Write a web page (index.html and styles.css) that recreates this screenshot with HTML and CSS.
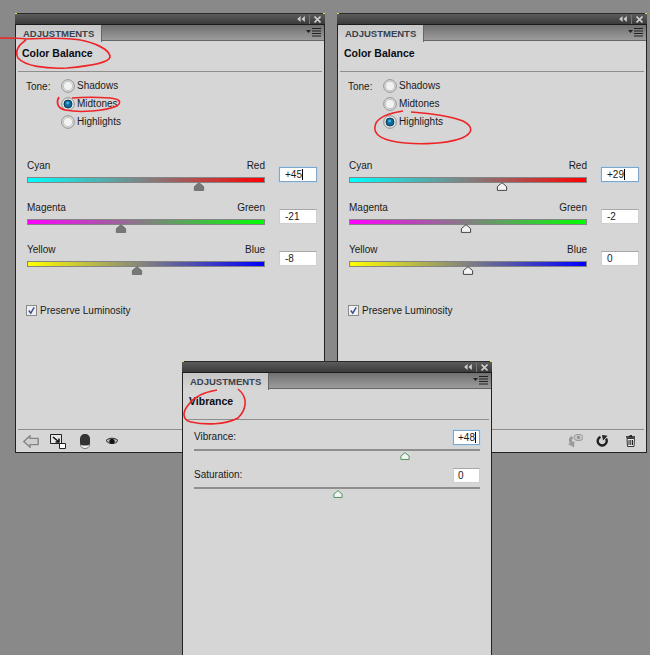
FILE: index.html
```html
<!doctype html>
<html lang="en">
    <head>
        <meta charset="UTF-8" />
        <title>Adjustments panels</title>
        <link rel="stylesheet" href="styles.css">
    </head>
    <body>
        <svg class="defs" width="0" height="0">
            <symbol id="thumb" viewBox="0 0 12 9">
                <path d="M6 .7 10.6 4.6V8.4H1.4V4.6Z" />
            </symbol>
            <symbol id="radio" viewBox="0 0 14 14">
                <circle cx="7" cy="7" r="6.3" fill="#e4e4e4" stroke="#8e8e8e" />
                <circle cx="7" cy="7" r="4.6" fill="#f2f2f2" stroke="#c4c4c4" />
            </symbol>
            <symbol id="radio-on" viewBox="0 0 14 14">
                <circle cx="7" cy="7" r="6.3" fill="#e4e4e4" stroke="#8e8e8e" />
                <circle cx="7" cy="7" r="4" fill="#0a6a9e" stroke="#123c58" />
                <circle cx="6.6" cy="6" r="1.5" fill="#45b4e2" />
            </symbol>
            <symbol id="menu" viewBox="0 0 15 9">
                <path d="M0 2H5L2.5 5Z" fill="#222" />
                <path d="M6 .5H15M6 3H15M6 5.5H15M6 8H15" stroke="#222" />
            </symbol>
            <symbol id="collapse" viewBox="0 0 9 7">
                <path d="M4 0V7L0 3.5ZM9 0V7L5 3.5Z" fill="#ccc" />
            </symbol>
            <symbol id="close" viewBox="0 0 7 7">
                <path d="M.5.5 6.5 6.5M6.5.5 .5 6.5" stroke="#ccc" stroke-width="1.6" />
            </symbol>
            <symbol id="back" viewBox="0 0 16 13">
                <path d="M.8 6.5 7 .8V3.4H15.2V9.6H7V12.2Z" fill="#cfcfcf" stroke="#858585" stroke-width="1.4" />
            </symbol>
            <symbol id="clip" viewBox="0 0 16 15">
                <path d="M.5.5H11.5V9.5H.5Z" fill="#e8e8e8" stroke="#222" />
                <path d="M3 3 9 8M9 4.5V8H5.5" fill="none" stroke="#111" stroke-width="1.5" />
                <path d="M9.5 9.5H15.5V14.5H9.5Z" fill="#fff" stroke="#222" />
            </symbol>
            <symbol id="layer" viewBox="0 0 10 15">
                <path d="M.5 9.5V11C.5 13 2.5 14.5 5 14.5S9.5 13 9.5 11V9.5Z" fill="#f2f2f2" stroke="#777" />
                <path d="M0 5C0 2 2 0 5 0S10 2 10 5V9C10 11 8 11.5 5 11.5S0 11 0 9Z" fill="#333" />
            </symbol>
            <symbol id="eye" viewBox="0 0 12 9">
                <path d="M0 3.5C3 .5 9 .5 12 3.5C10 7 3 8 0 3.5Z" fill="#bbb" stroke="#222" />
                <circle cx="6" cy="4.3" r="2.6" fill="#111" />
            </symbol>
            <symbol id="prev" viewBox="0 0 16 14">
                <path d="M5 2C2 3 1 6 3 9L1 10 7 13.5 7.5 7 5.5 8C4.5 6.5 5 5 6 4.5Z" fill="#9a9a9a" />
                <ellipse cx="11.5" cy="3.5" rx="4.5" ry="3" fill="#c8c8c8" stroke="#929292" />
                <circle cx="11.5" cy="3.5" r="1.4" fill="#8a8a8a" />
            </symbol>
            <symbol id="reset" viewBox="0 0 12 12">
                <path d="M4.5 1.8A4.5 4.5 0 1 0 10 3.5" fill="none" stroke="#222" stroke-width="2.4" />
                <path d="M6 0 11.5 .8 7 5.5Z" fill="#222" />
            </symbol>
            <symbol id="trash" viewBox="0 0 11 12">
                <path d="M1 2H10M4 1.5 7 .5" stroke="#222" stroke-width="1.5" />
                <path d="M2 3.5H9.5L9 11.5H2.5Z" fill="#eee" stroke="#333" />
                <path d="M4 5V10M5.8 5V10M7.5 5V10" stroke="#222" />
            </symbol>
        </svg>

        <section class="panel panel-left">
            <div class="titlebar">
                <svg class="icon-collapse"><use href="#collapse" /></svg>
                <span class="titlebar-sep"></span>
                <svg class="icon-close"><use href="#close" /></svg>
            </div>
            <div class="tabstrip">
                <div class="tab">ADJUSTMENTS</div>
                <svg class="icon-menu"><use href="#menu" /></svg>
            </div>
            <h2 class="panel-title">Color Balance</h2>
            <div class="tone">
                <span class="tone-label">Tone:</span>
                <div class="tone-options">
                    <div class="radio-row"><svg class="radio"><use href="#radio" /></svg>Shadows</div>
                    <div class="radio-row"><svg class="radio"><use href="#radio-on" /></svg>Midtones</div>
                    <div class="radio-row"><svg class="radio"><use href="#radio" /></svg>Highlights</div>
                </div>
            </div>
            <div class="balance-rows">
                <div class="balance-row">
                    <div class="balance-slider">
                        <div class="balance-labels"><span>Cyan</span><span>Red</span></div>
                        <div class="track track-cr">
                            <svg class="thumb thumb-dark" style="left: 72.5%"><use href="#thumb" /></svg>
                        </div>
                    </div>
                    <div class="value value-focus">+45<i class="caret"></i></div>
                </div>
                <div class="balance-row">
                    <div class="balance-slider">
                        <div class="balance-labels"><span>Magenta</span><span>Green</span></div>
                        <div class="track track-mg">
                            <svg class="thumb thumb-dark" style="left: 39.5%"><use href="#thumb" /></svg>
                        </div>
                    </div>
                    <div class="value">-21</div>
                </div>
                <div class="balance-row">
                    <div class="balance-slider">
                        <div class="balance-labels"><span>Yellow</span><span>Blue</span></div>
                        <div class="track track-yb">
                            <svg class="thumb thumb-dark" style="left: 46%"><use href="#thumb" /></svg>
                        </div>
                    </div>
                    <div class="value">-8</div>
                </div>
            </div>
            <label class="preserve">
                <span class="checkbox"><svg viewBox="0 0 10 10"><path d="M2 5 4.2 8 8 1.5" /></svg></span>
                Preserve Luminosity
            </label>
            <div class="footer">
                <svg class="foot-back"><use href="#back" /></svg>
                <svg class="foot-clip"><use href="#clip" /></svg>
                <svg class="foot-layer"><use href="#layer" /></svg>
                <svg class="foot-eye"><use href="#eye" /></svg>
            </div>
        </section>

        <section class="panel panel-right">
            <div class="titlebar">
                <svg class="icon-collapse"><use href="#collapse" /></svg>
                <span class="titlebar-sep"></span>
                <svg class="icon-close"><use href="#close" /></svg>
            </div>
            <div class="tabstrip">
                <div class="tab">ADJUSTMENTS</div>
                <svg class="icon-menu"><use href="#menu" /></svg>
            </div>
            <h2 class="panel-title">Color Balance</h2>
            <div class="tone">
                <span class="tone-label">Tone:</span>
                <div class="tone-options">
                    <div class="radio-row"><svg class="radio"><use href="#radio" /></svg>Shadows</div>
                    <div class="radio-row"><svg class="radio"><use href="#radio" /></svg>Midtones</div>
                    <div class="radio-row"><svg class="radio"><use href="#radio-on" /></svg>Highlights</div>
                </div>
            </div>
            <div class="balance-rows">
                <div class="balance-row">
                    <div class="balance-slider">
                        <div class="balance-labels"><span>Cyan</span><span>Red</span></div>
                        <div class="track track-cr">
                            <svg class="thumb" style="left: 64.5%"><use href="#thumb" /></svg>
                        </div>
                    </div>
                    <div class="value value-focus">+29<i class="caret"></i></div>
                </div>
                <div class="balance-row">
                    <div class="balance-slider">
                        <div class="balance-labels"><span>Magenta</span><span>Green</span></div>
                        <div class="track track-mg">
                            <svg class="thumb" style="left: 49%"><use href="#thumb" /></svg>
                        </div>
                    </div>
                    <div class="value">-2</div>
                </div>
                <div class="balance-row">
                    <div class="balance-slider">
                        <div class="balance-labels"><span>Yellow</span><span>Blue</span></div>
                        <div class="track track-yb">
                            <svg class="thumb" style="left: 50%"><use href="#thumb" /></svg>
                        </div>
                    </div>
                    <div class="value">0</div>
                </div>
            </div>
            <label class="preserve">
                <span class="checkbox"><svg viewBox="0 0 10 10"><path d="M2 5 4.2 8 8 1.5" /></svg></span>
                Preserve Luminosity
            </label>
            <div class="footer footer-end">
                <svg class="foot-prev"><use href="#prev" /></svg>
                <svg class="foot-reset"><use href="#reset" /></svg>
                <svg class="foot-trash"><use href="#trash" /></svg>
            </div>
        </section>

        <section class="panel panel-front">
            <div class="titlebar">
                <svg class="icon-collapse"><use href="#collapse" /></svg>
                <span class="titlebar-sep"></span>
                <svg class="icon-close"><use href="#close" /></svg>
            </div>
            <div class="tabstrip">
                <div class="tab">ADJUSTMENTS</div>
                <svg class="icon-menu"><use href="#menu" /></svg>
            </div>
            <h2 class="panel-title">Vibrance</h2>
            <div class="vibrance-rows">
                <div class="vibrance-row">
                    <div class="vibrance-head">
                        <span>Vibrance:</span>
                        <div class="value value-small value-focus">+48<i class="caret"></i></div>
                    </div>
                    <div class="track track-plain">
                        <svg class="thumb thumb-green" style="left: 73.8%"><use href="#thumb" /></svg>
                    </div>
                </div>
                <div class="vibrance-row">
                    <div class="vibrance-head">
                        <span>Saturation:</span>
                        <div class="value value-small">0</div>
                    </div>
                    <div class="track track-plain">
                        <svg class="thumb thumb-green" style="left: 50.3%"><use href="#thumb" /></svg>
                    </div>
                </div>
            </div>
        </section>

        <!-- red marker scribbles drawn over the screenshot -->
        <svg class="scribbles" viewBox="0 0 650 655">
            <path d="M0 38C10 38 20 38 26 39C45 38 70 37 85 41C100 45 110 51 110 57C109 63 90 66 67 68C45 69 25 66 18 58C15 52 17 46 26 40" />
            <path d="M59 97C56 102 57 108 65 110C80 113 105 111 117 106C122 102 120 99 110 98C95 97 85 97 72 98" />
            <path d="M403 111C390 113 380 116 376 123C372 132 378 138 392 141C410 145 445 145 462 138C473 133 474 127 463 121C450 116 425 113 411 112" />
            <path d="M217 390C205 392 195 396 189 404C182 412 182 420 191 422C205 425 225 425 238 418C246 410 249 398 238 389" />
        </svg>
    </body>
</html>
```

FILE: styles.css
```css
* {
    margin: 0;
    padding: 0;
    box-sizing: border-box;
}

body {
    width: 650px;
    height: 655px;
    position: relative;
    overflow: hidden;
    background: #898989;
    font-family: "Liberation Sans", Arial, sans-serif;
    font-size: 10px;
    color: #1a1a1a;
}

.defs {
    position: absolute;
}

/* panels sit on a free canvas like windows */
.panel {
    position: absolute;
    width: 310px;
    height: 440px;
    background: #d6d6d6;
    border: 1px solid #222;
    border-top: 0;
    display: flex;
    flex-direction: column;
}

.panel::before,
.panel::after {
    content: "";
    position: absolute;
    top: 0;
    width: 2px;
    height: 1px;
    background: #e8e23a;
}

.panel::before {
    left: -1px;
}

.panel::after {
    right: -1px;
}

.panel-left {
    left: 15px;
    top: 13px;
}

.panel-right {
    left: 337px;
    top: 13px;
}

.panel-front {
    left: 182px;
    top: 361px;
    height: 300px;
}

.titlebar {
    height: 12px;
    flex: none;
    display: flex;
    align-items: center;
    justify-content: flex-end;
    gap: 4px;
    padding-right: 4px;
    background: linear-gradient(#5c5c5c, #3a3a3a);
    border-top: 1px solid #2a2a2a;
    border-bottom: 1px solid #1c1c1c;
    margin: 0 -1px;
}

.titlebar-sep {
    width: 1px;
    height: 9px;
    background: #777;
}

.icon-collapse {
    width: 8px;
    height: 6px;
}

.icon-close {
    width: 7px;
    height: 7px;
}

.tabstrip {
    height: 16px;
    flex: none;
    display: flex;
    justify-content: space-between;
    align-items: center;
    padding-right: 3px;
    background: linear-gradient(#707070, #9c9c9c);
    border-bottom: 1px solid #666;
}

.tab {
    width: 86px;
    height: 17px;
    align-self: flex-start;
    padding-left: 7px;
    background: linear-gradient(#c6c6c6, #d6d6d6);
    border-right: 1px solid #666;
    font-size: 9.5px;
    font-weight: 700;
    line-height: 17px;
    color: #39424e;
    white-space: nowrap;
}

.icon-menu {
    width: 15px;
    height: 9px;
}

.panel-title {
    flex: none;
    height: 31px;
    margin: 0 2px;
    padding: 4px 4px 0;
    font-size: 10.5px;
    font-weight: 700;
    line-height: 16px;
    color: #0c0c14;
    border-bottom: 1px solid #8e8e8e;
}

.tone {
    display: flex;
    padding: 5px 0 0 10px;
    height: 87px;
    flex: none;
}

.tone-label {
    width: 35px;
    line-height: 20px;
}

.tone-options {
    display: flex;
    flex-direction: column;
}

.radio-row {
    height: 18px;
    display: flex;
    align-items: center;
    gap: 2px;
    line-height: 14px;
    padding-bottom: 1px;
}

.radio {
    width: 14px;
    height: 14px;
    flex: none;
    margin-top: 1px;
}

.balance-rows {
    display: flex;
    flex-direction: column;
    gap: 18px;
    padding-left: 11px;
    flex: none;
}

.balance-row {
    display: flex;
    align-items: flex-start;
    gap: 14px;
}

.balance-slider {
    width: 238px;
}

.balance-labels {
    height: 12px;
    display: flex;
    justify-content: space-between;
    line-height: 14px;
}

.value {
    width: 38px;
    height: 15px;
    margin-top: 8px;
    padding-left: 5px;
    background: #fff;
    border: 1px solid #cfcfcf;
    border-top-color: #a8a8a8;
    line-height: 13px;
    white-space: nowrap;
}

.value-focus {
    border-color: #7fa6c8;
    box-shadow: 0 0 0 1px #c3d6e6;
}

.caret {
    display: inline-block;
    width: 1px;
    height: 11px;
    background: #000;
    vertical-align: -2px;
}

.track {
    position: relative;
    height: 6px;
    margin-top: 6px;
    border: 1px solid #858585;
}

.track-cr {
    background: linear-gradient(90deg, #00ffff, #808080 50%, #ff0000);
}

.track-mg {
    background: linear-gradient(90deg, #ff00ff, #808080 50%, #00ff00);
}

.track-yb {
    background: linear-gradient(90deg, #ffff00, #808080 50%, #0000ff);
}

.thumb {
    position: absolute;
    top: 4px;
    width: 12px;
    height: 9px;
    margin-left: -6px;
    fill: #f4f4f4;
    stroke: #444;
}

.thumb-dark {
    fill: #777;
    stroke: #6e6e6e;
}

.thumb-green {
    fill: #f4f4f4;
    stroke: #3d8a4a;
}

.preserve {
    display: flex;
    align-items: center;
    gap: 3px;
    margin: 37px 0 0 10px;
    height: 12px;
    flex: none;
}

.checkbox {
    width: 11px;
    height: 11px;
    flex: none;
    background: #eef0f4;
    border: 1px solid #8a8a8a;
}

.checkbox svg {
    display: block;
    fill: none;
    stroke: #3c4f8c;
    stroke-width: 1.6;
}

.footer {
    margin: auto 2px 0;
    height: 23px;
    display: flex;
    align-items: center;
    border-top: 1px solid #8e8e8e;
    padding: 0 0 0 5px;
    flex: none;
}

.footer-end {
    justify-content: flex-end;
    padding-right: 8px;
}

.foot-back {
    width: 16px;
    height: 13px;
}

.foot-clip {
    width: 16px;
    height: 15px;
    margin-left: 11px;
}

.foot-layer {
    width: 10px;
    height: 15px;
    margin-left: 14px;
}

.foot-eye {
    width: 12px;
    height: 9px;
    margin-left: 16px;
}

.foot-prev {
    width: 16px;
    height: 14px;
}

.foot-reset {
    width: 12px;
    height: 12px;
    margin-left: 13px;
}

.foot-trash {
    width: 11px;
    height: 12px;
    margin-left: 17px;
}

.vibrance-rows {
    display: flex;
    flex-direction: column;
    gap: 17px;
    padding: 10px 11px 0 11px;
}

.vibrance-head {
    display: flex;
    justify-content: space-between;
    align-items: flex-start;
    line-height: 14px;
    height: 15px;
}

.value-small {
    width: 27px;
    height: 15px;
    margin: 0;
    padding-left: 4px;
    line-height: 13px;
}

.track-plain {
    height: 2px;
    margin-top: 4px;
    border: 0;
    background: #8e8e8e;
}

.track-plain .thumb {
    top: 3px;
    width: 12px;
    height: 8px;
}

.scribbles {
    position: absolute;
    left: 0;
    top: 0;
    width: 650px;
    height: 655px;
    fill: none;
    stroke: #ee2528;
    stroke-width: 1.6;
    pointer-events: none;
}
```
